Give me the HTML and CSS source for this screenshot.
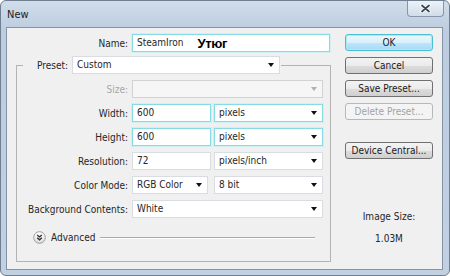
FILE: index.html
```html
<!DOCTYPE html>
<html lang="en">
<head>
  <meta charset="UTF-8">
  <title>New</title>
  <link rel="stylesheet" href="styles.css">
</head>
<body>
  <div class="window">
    <div class="titlebar">
      <span class="title">New</span>
      <div class="close">
        <svg width="11" height="9" viewBox="0 0 11 9">
          <path d="M2 1.5 L9 7.5 M9 1.5 L2 7.5" stroke="#fff" stroke-width="3.6" stroke-linecap="round"/>
          <path d="M2 1.5 L9 7.5 M9 1.5 L2 7.5" stroke="#3d4650" stroke-width="1.7" stroke-linecap="round"/>
        </svg>
      </div>
    </div>

    <div class="client">
      <div class="main">
        <div class="name-row">
          <label class="lbl name-lbl">Name:</label>
          <div class="field focus name-field"><span>SteamIron</span><span class="ru">Утюг</span></div>
        </div>

        <fieldset class="group">
          <legend>
            <span class="lbl preset-lbl">Preset:</span>
            <div class="drop preset">Custom<i class="arrow"></i></div>
          </legend>

          <div class="row">
            <label class="lbl off">Size:</label>
            <div class="drop wide disabled"><i class="arrow"></i></div>
          </div>
          <div class="row">
            <label class="lbl">Width:</label>
            <div class="field focus num">600</div>
            <div class="drop unit focus">pixels<i class="arrow"></i></div>
          </div>
          <div class="row">
            <label class="lbl">Height:</label>
            <div class="field focus num">600</div>
            <div class="drop unit focus">pixels<i class="arrow"></i></div>
          </div>
          <div class="row">
            <label class="lbl">Resolution:</label>
            <div class="field num">72</div>
            <div class="drop unit">pixels/inch<i class="arrow"></i></div>
          </div>
          <div class="row">
            <label class="lbl">Color Mode:</label>
            <div class="drop mode">RGB Color<i class="arrow"></i></div>
            <div class="drop unit">8 bit<i class="arrow"></i></div>
          </div>
          <div class="row">
            <label class="lbl">Background Contents:</label>
            <div class="drop wide">White<i class="arrow"></i></div>
          </div>

          <div class="adv-row">
            <svg class="adv-icon" width="13" height="13" viewBox="0 0 13 13">
              <defs>
                <linearGradient id="g" x1="0" y1="0" x2="0" y2="1">
                  <stop offset="0" stop-color="#ffffff"/>
                  <stop offset="1" stop-color="#dcdcdc"/>
                </linearGradient>
              </defs>
              <circle cx="6.5" cy="6.5" r="5.8" fill="url(#g)" stroke="#9c9c9c"/>
              <path d="M4.2 3.9 L6.5 5.9 L8.8 3.9 M4.2 6.8 L6.5 8.8 L8.8 6.8" fill="none" stroke="#2e2e2e" stroke-width="1.3"/>
            </svg>
            <span>Advanced</span>
            <div class="adv-line"></div>
          </div>
        </fieldset>
      </div>

      <div class="side">
        <button class="btn default">OK</button>
        <button class="btn">Cancel</button>
        <button class="btn">Save Preset...</button>
        <button class="btn" disabled>Delete Preset...</button>
        <button class="btn device">Device Central...</button>
        <div class="img-size">Image Size:</div>
        <div class="img-val">1.03M</div>
      </div>
    </div>
  </div>
</body>
</html>
```

FILE: styles.css
```css
body {
  margin: 0;
  background: #ffffff;
  font-family: "DejaVu Sans Condensed", "DejaVu Sans", sans-serif;
  font-stretch: condensed;
  font-size: 10px;
  color: #262626;
}
.window {
  width: 450px;
  height: 276px;
  box-sizing: border-box;
  border: 1px solid #6f7e90;
  border-radius: 6px;
  background: linear-gradient(#d0dcea, #bccddf 30px, #c1d1e2);
  display: flex;
  flex-direction: column;
  overflow: hidden;
}
.titlebar {
  height: 26px;
  display: flex;
  justify-content: space-between;
  align-items: center;
  padding-left: 6px;
}
.title {
  font-size: 11px;
  color: #1c1c1c;
}
.close {
  align-self: flex-start;
  width: 37px;
  height: 16px;
  margin-right: 5px;
  box-sizing: border-box;
  border: 1px solid #8796a8;
  border-top: none;
  border-radius: 0 0 4px 4px;
  background: linear-gradient(#edf2f8, #d0dcea);
  display: flex;
  align-items: center;
  justify-content: center;
}
.client {
  flex: 1;
  margin: 0 6px 5px 5px;
  border: 1px solid #8493a5;
  background: #f0f0f0;
  display: flex;
}
.main {
  width: 324px;
  padding-top: 6px;
}
.lbl {
  display: block;
  text-align: right;
  white-space: nowrap;
}
.off {
  color: #a8a8a8;
}
.name-row {
  display: flex;
  align-items: center;
}
.name-lbl {
  width: 121px;
  margin-right: 4px;
}
.field, .drop {
  height: 18px;
  box-sizing: border-box;
  background: #ffffff;
  border: 1px solid #d9dde2;
  padding: 0 4px;
  line-height: 16px;
  white-space: nowrap;
}
.focus {
  border-color: #86dbe6;
  box-shadow: 0 0 0 1px #cdf2f6;
}
.name-field {
  width: 198px;
  display: flex;
  align-items: center;
}
.ru {
  font-family: "Liberation Sans Narrow", "Liberation Sans", sans-serif;
  font-weight: bold;
  font-size: 13px;
  letter-spacing: -0.3px;
  color: #000000;
  margin-left: 14px;
  margin-top: 1px;
}
.group {
  margin: 4px 0 0 9px;
  padding: 6px 7px 17px 0;
  border: 1px solid #b3b3b3;
  min-width: 0;
}
.group legend {
  margin-left: 6px;
  padding: 0 1px;
  display: flex;
  align-items: center;
}
.preset-lbl {
  width: 44px;
  margin-right: 4px;
}
.drop {
  display: flex;
  align-items: center;
  padding-right: 5px;
}
.arrow {
  margin-left: auto;
  width: 0;
  height: 0;
  border-left: 3.5px solid transparent;
  border-right: 3.5px solid transparent;
  border-top: 4px solid #111111;
}
.preset {
  width: 208px;
}
.row {
  display: flex;
  align-items: center;
  margin-bottom: 6px;
}
.row .lbl {
  width: 111px;
  margin-right: 4px;
}
.wide {
  width: 191px;
}
.num {
  width: 79px;
  margin-right: 3px;
}
.mode {
  width: 76px;
  margin-right: 6px;
}
.unit {
  width: 109px;
}
.disabled {
  background: #f6f6f6;
  border-color: #d2d2d2;
}
.disabled .arrow {
  border-top-color: #b0b0b0;
}
.adv-row {
  display: flex;
  align-items: center;
  height: 14px;
  margin-top: 12px;
  padding-left: 16px;
}
.adv-icon {
  margin-right: 5px;
}
.adv-line {
  flex: 1;
  margin: 1px 8px 0 5px;
  border-top: 1px solid #a9a9a9;
  border-bottom: 1px solid #ffffff;
}
.side {
  width: 88px;
  margin-left: 14px;
  padding-top: 6px;
  display: flex;
  flex-direction: column;
}
.btn {
  height: 17px;
  margin-bottom: 6px;
  padding: 0;
  font-family: inherit;
  font-stretch: condensed;
  font-size: 10px;
  color: #1a1a1a;
  border: 1px solid #707070;
  border-radius: 3px;
  background: linear-gradient(#f3f3f3, #ebebeb 50%, #dddddd 51%, #cfcfcf);
}
.btn.default {
  border-color: #4cbfd2;
  background: linear-gradient(#eaf7fd, #d9f0fb 50%, #bee6fd 51%, #a7d9f5);
  box-shadow: inset 0 0 0 1px #a6ecf4;
}
.btn:disabled {
  color: #a3a3a3;
  border-color: #b5b9bc;
  background: #f4f4f4;
}
.btn.device {
  margin-top: 16px;
}
.img-size, .img-val {
  text-align: center;
  line-height: 14px;
}
.img-size {
  margin-top: 45px;
}
.img-val {
  margin-top: 8px;
}
```
